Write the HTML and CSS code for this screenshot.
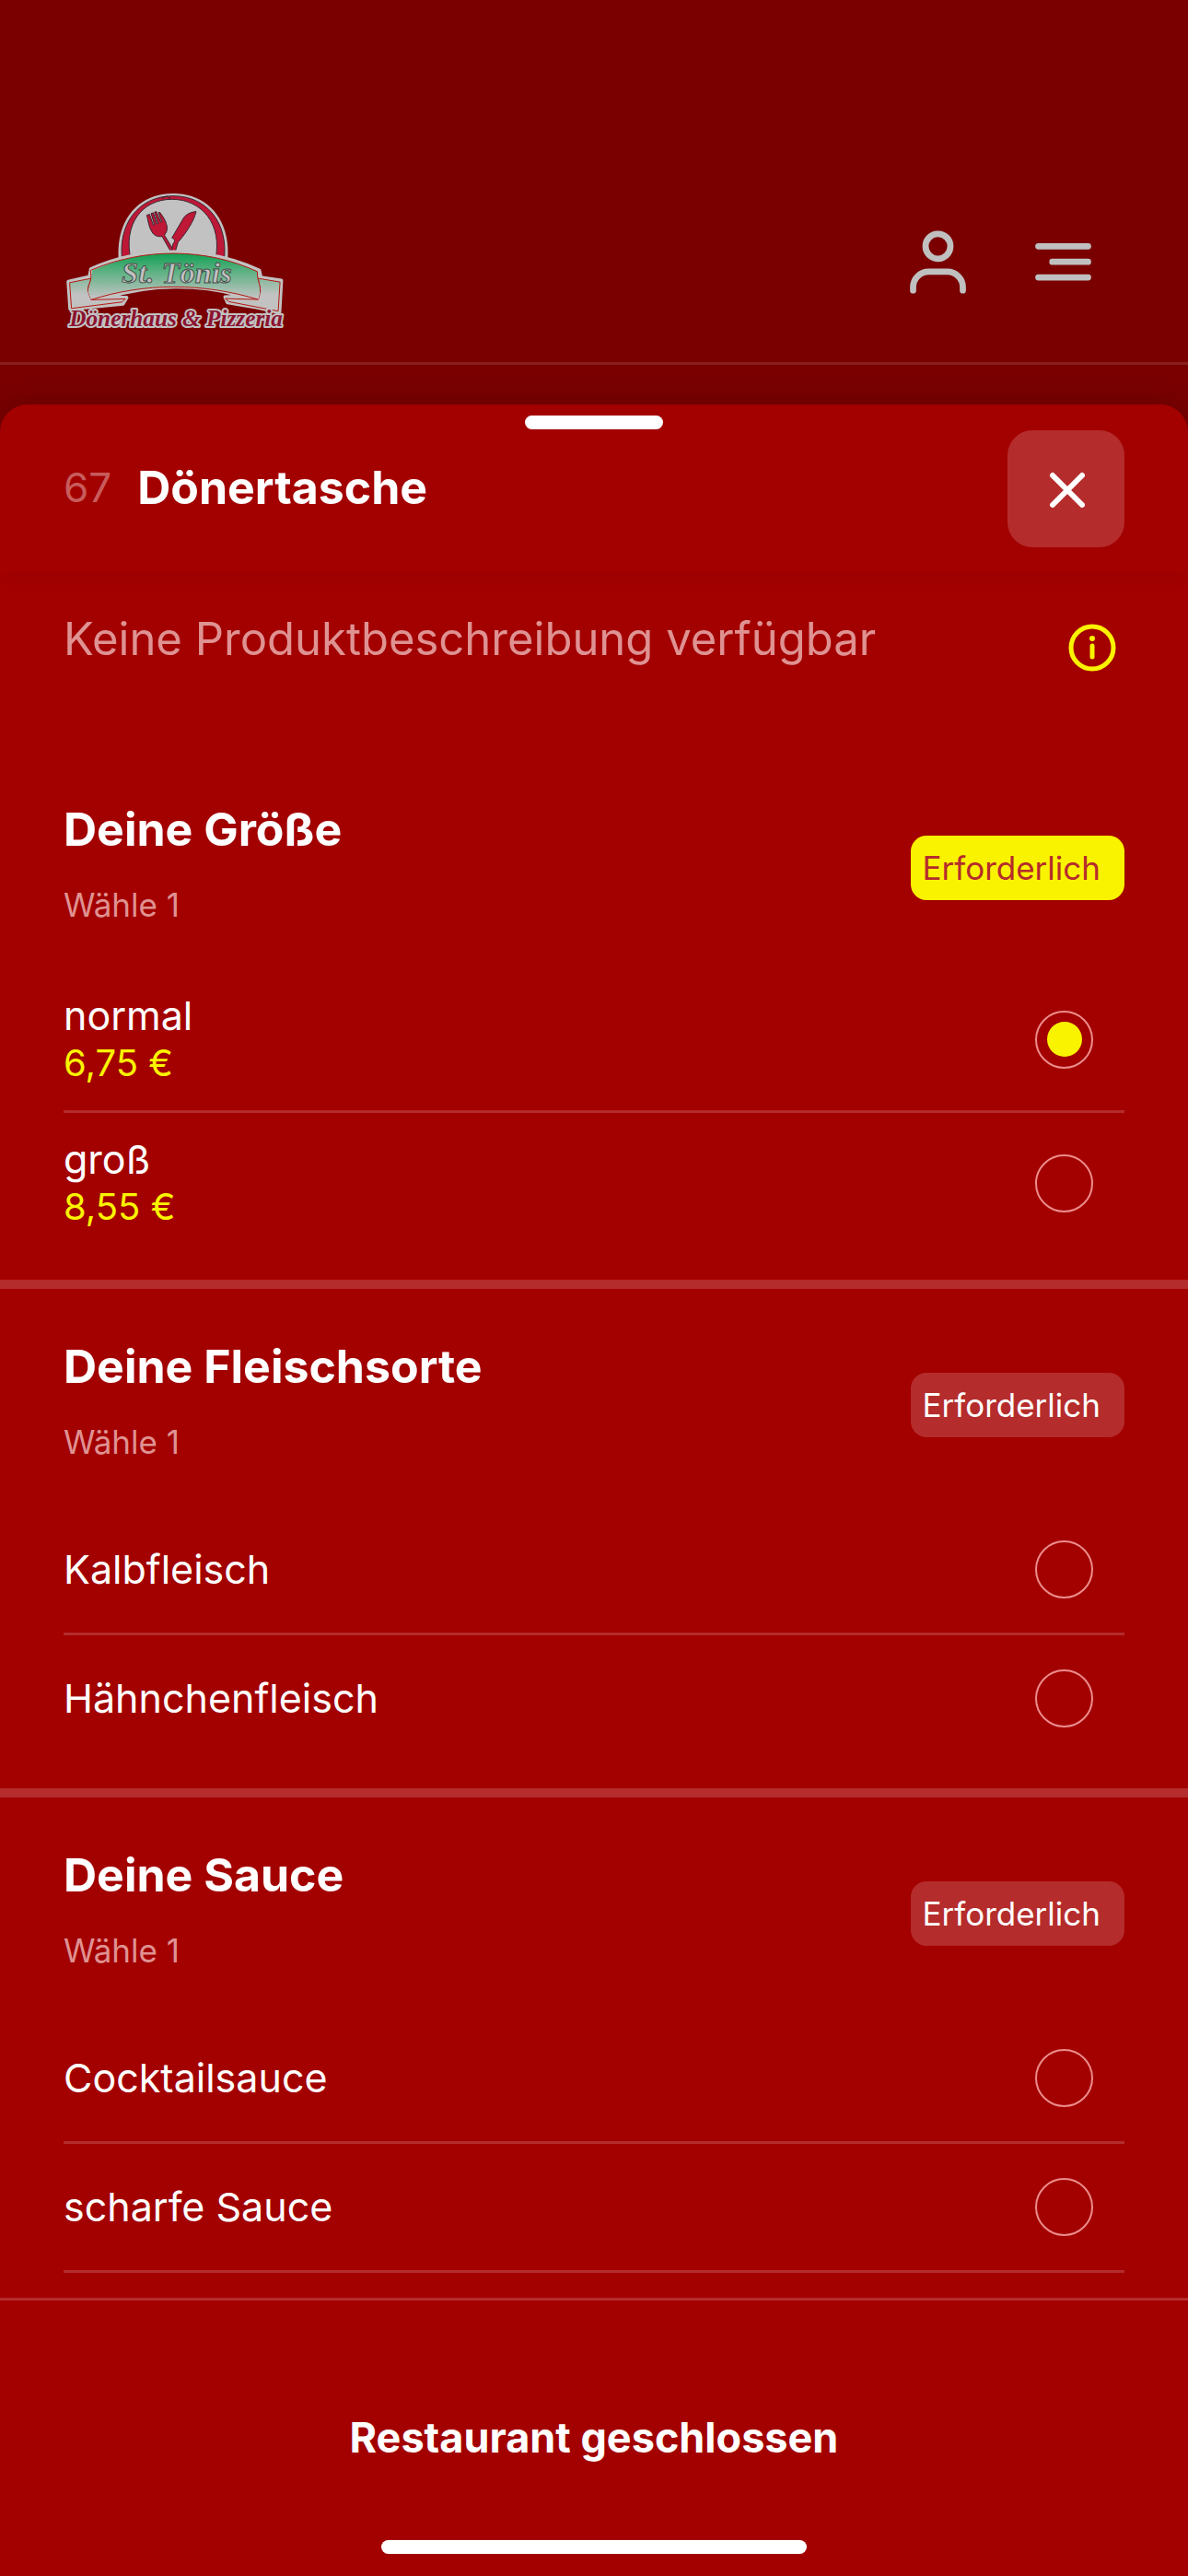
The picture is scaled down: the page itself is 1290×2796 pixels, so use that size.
FILE: index.html
```html
<!DOCTYPE html>
<html lang="de">
<head>
    <meta charset="UTF-8">
    <meta name="viewport" content="width=device-width, initial-scale=1.0">
    <title>Dönertasche</title>
    <link rel="stylesheet" href="styles.css">
</head>
<body>
    <header class="topbar">
        <a href="#" class="logo">
            <svg viewBox="60 50 720 460" width="240" height="153">
                <defs>
                    <linearGradient id="banner" x1="0" y1="250" x2="0" y2="400" gradientUnits="userSpaceOnUse">
                        <stop offset="0" stop-color="#0a9f50"/>
                        <stop offset="0.4" stop-color="#58b080"/>
                        <stop offset="1" stop-color="#c2c4c4"/>
                    </linearGradient>
                    <linearGradient id="ends" x1="0" y1="330" x2="0" y2="430" gradientUnits="userSpaceOnUse">
                        <stop offset="0" stop-color="#7fb898"/>
                        <stop offset="0.6" stop-color="#c2c2c2"/>
                    </linearGradient>
                </defs>
                <!-- plate -->
                <path d="M236 275 C226 140 305 59 414 59 S602 140 592 275Z" fill="#c2c2c2"/>
                <path d="M248 278 C232 160 300 67 414 67 S596 160 580 278Z" fill="#bf1736" stroke="#3a2430" stroke-width="3"/>
                <path d="M276 275 C250 160 312 78 410 78 S576 160 552 275Z" fill="#c2c2c2" stroke="#3a2430" stroke-width="3"/>
                <path d="M376 75 L394 68 L408 78" fill="none" stroke="#3a2430" stroke-width="3"/>
                <!-- fork -->
                <path d="M328 130 L337 127 L349 162 L353 161 L342 124 L349 122 L361 158 L365 157 L353 120 L359 118 L374 153 L377 151 L366 121 L371 121 C385 140 396 158 394 178 C392 188 387 190 386 196 L418 248 L411 257 L378 199 C366 201 355 198 347 188 C335 172 333 150 328 130Z" fill="#bf1736" stroke="#3a2430" stroke-width="3"/>
                <!-- knife -->
                <path d="M489 118 C482 148 460 184 430 218 L420 252 L408 252 L414 222 C423 214 417 206 410 204 L448 139 C458 125 472 120 489 118Z" fill="#bf1736" stroke="#3a2430" stroke-width="3"/>
                <!-- ribbon -->
                <path d="M72 347 L141 331 L146 306 C310 232 520 230 695 310 L700 333 L767 343 L761 447 L690 431 L592 415 L584 397 L640 394 C500 352 340 354 200 398 L262 399 L250 419 L78 436Z" fill="#c2c2c2" stroke="#c2c2c2" stroke-width="12" stroke-linejoin="round"/>
                <path d="M76 350 L146 336 L136 378 L146 406 L258 403 L248 413 L82 434Z" fill="url(#ends)" stroke="#b5170f" stroke-width="3"/>
                <path d="M763 348 L692 336 L699 378 L692 405 L584 402 L596 412 L757 443Z" fill="url(#ends)" stroke="#b5170f" stroke-width="3"/>
                <path d="M136 378 C140 355 146 350 150 310 C315 236 520 235 689 314 C692 350 698 350 698 380 L692 405 C510 350 320 350 146 406Z" fill="url(#banner)"/>
                <path d="M136 378 C132 355 152 350 144 310 C315 236 520 235 689 314 C688 350 700 350 698 380 M692 405 C510 350 320 350 146 406" fill="none" stroke="#b5170f" stroke-width="3"/>
                <text x="246" y="350" class="logo-name">St. Tönis</text>
                <text x="75" y="493" class="logo-sub">Dönerhaus &amp; Pizzeria</text>
            </svg>
        </a>
        <div class="topbar-actions">
            <button type="button" class="icon-button" aria-label="Konto">
                <svg viewBox="0 0 24 24" width="81" height="81">
                    <circle cx="12" cy="7.2" r="4"/>
                    <path d="M4 21.4v-1a5 5 0 0 1 5-5h6a5 5 0 0 1 5 5v1"/>
                </svg>
            </button>
            <button type="button" class="icon-button" aria-label="Menü">
                <svg viewBox="0 0 24 24" width="81" height="81">
                    <path d="M4 7.2h16M8.5 12.2H20M4 17.2h16"/>
                </svg>
            </button>
        </div>
    </header>

    <main class="sheet">
        <div class="handle"></div>
        <div class="sheet-header">
            <span class="number">67</span>
            <h1>Dönertasche</h1>
            <button type="button" class="close" aria-label="Schließen">
                <svg viewBox="0 0 40 40" width="40" height="40">
                    <path d="M5 5l32 32M37 5L5 37"/>
                </svg>
            </button>
        </div>

        <form class="sheet-body">
            <div class="description">
                <p>Keine Produktbeschreibung verfügbar</p>
                <button type="button" class="info" aria-label="Info">
                    <svg viewBox="0 0 52 52" width="52" height="52">
                        <circle cx="26" cy="26" r="23"/>
                        <path d="M26 24v12"/>
                        <circle class="dot" cx="26" cy="16" r="3"/>
                    </svg>
                </button>
            </div>

            <section class="group">
                <div class="group-header">
                    <div>
                        <h2>Deine Größe</h2>
                        <p>Wähle 1</p>
                    </div>
                    <span class="badge active">Erforderlich</span>
                </div>
                <label class="option">
                    <span>normal<span class="price">6,75 €</span></span>
                    <input type="radio" name="size" checked>
                </label>
                <label class="option">
                    <span>groß<span class="price">8,55 €</span></span>
                    <input type="radio" name="size">
                </label>
            </section>

            <section class="group">
                <div class="group-header">
                    <div>
                        <h2>Deine Fleischsorte</h2>
                        <p>Wähle 1</p>
                    </div>
                    <span class="badge">Erforderlich</span>
                </div>
                <label class="option">
                    <span>Kalbfleisch</span>
                    <input type="radio" name="meat">
                </label>
                <label class="option">
                    <span>Hähnchenfleisch</span>
                    <input type="radio" name="meat">
                </label>
            </section>

            <section class="group more">
                <div class="group-header">
                    <div>
                        <h2>Deine Sauce</h2>
                        <p>Wähle 1</p>
                    </div>
                    <span class="badge">Erforderlich</span>
                </div>
                <label class="option">
                    <span>Cocktailsauce</span>
                    <input type="radio" name="sauce">
                </label>
                <label class="option">
                    <span>scharfe Sauce</span>
                    <input type="radio" name="sauce">
                </label>
            </section>
        </form>

        <footer class="sheet-footer">
            <button type="button" class="order">Restaurant geschlossen</button>
            <div class="home-indicator"></div>
        </footer>
    </main>
</body>
</html>
```
FILE: styles.css
```css
* {
    box-sizing: border-box;
}
body {
    margin: 0;
    height: 100vh;
    display: flex;
    flex-direction: column;
    overflow: hidden;
    background: #7a0000;
    color: #fff;
    font-family: Inter, "Liberation Sans", sans-serif;
    font-size: 44px;
}
h1, h2, p {
    margin: 0;
}
button {
    padding: 0;
    border: none;
    background: none;
    color: inherit;
    font-family: inherit;
    cursor: pointer;
}
svg {
    display: block;
}

/* page header behind the sheet */
.topbar {
    flex: none;
    display: flex;
    justify-content: space-between;
    align-items: center;
    height: 396px;
    padding: 174px 95px 0 70px;
    border-bottom: 3px solid #881f1f;
}
.logo-name {
    font: italic bold 98px "Liberation Serif", serif;
    fill: #c2c2c2;
    stroke: #44504a;
    stroke-width: 3px;
}
.logo-sub {
    font: italic bold 76px "Liberation Serif", serif;
    fill: #8c1230;
    stroke: #c2c2c2;
    stroke-width: 12px;
    stroke-linejoin: round;
    paint-order: stroke;
}
.topbar-actions {
    display: flex;
    gap: 55px;
}
.icon-button svg {
    fill: none;
    stroke: #c0c0c0;
    stroke-width: 2;
    stroke-linecap: round;
}

/* bottom sheet */
.sheet {
    position: relative;
    flex: 1;
    min-height: 0;
    display: flex;
    flex-direction: column;
    margin-top: 43px;
    background: #a30000;
    border-radius: 30px 30px 0 0;
    box-shadow: 0 0 30px rgba(0, 0, 0, 0.2);
}
.handle {
    position: absolute;
    top: 12px;
    left: 50%;
    width: 150px;
    height: 15px;
    margin-left: -75px;
    border-radius: 8px;
    background: #fff;
}
.sheet-header {
    flex: none;
    display: flex;
    align-items: center;
    height: 183px;
    padding: 0 69px;
    border-radius: 30px 30px 0 0;
    box-shadow: 0 15px 15px -6px rgba(0, 0, 0, 0.04);
}
.number,
h1 {
    padding-bottom: 3px;
}
.number {
    color: #c85c5c;
}
h1 {
    margin-left: 28px;
    font-size: 50px;
    font-weight: 700;
}
.close {
    display: flex;
    align-items: center;
    justify-content: center;
    width: 127px;
    height: 127px;
    margin-left: auto;
    border-radius: 27px;
    background: #b52c2c;
}
.close svg {
    fill: none;
    stroke: #fff;
    stroke-width: 6;
    stroke-linecap: round;
}
.sheet-body {
    flex: 1;
    min-height: 0;
    overflow: hidden;
}
.description {
    display: flex;
    justify-content: space-between;
    align-items: flex-start;
    height: 194px;
    padding: 42px 78px 0 69px;
    font-size: 49px;
    line-height: 60px;
    color: #df9292;
}
.info {
    margin-top: 13px;
}
.info svg {
    fill: none;
    stroke: #faf300;
    stroke-width: 5;
    stroke-linecap: round;
}
.info .dot {
    fill: #faf300;
    stroke: none;
}

.group {
    padding: 0 69px 28px;
    border-bottom: 10px solid #b52c2c;
}
.group-header {
    display: flex;
    justify-content: space-between;
    align-items: center;
    height: 236px;
    padding: 46px 0 30px;
}
.group-header h2 {
    font-size: 50px;
    font-weight: 700;
    line-height: 76px;
}
.group-header p {
    margin-top: 4px;
    font-size: 35px;
    line-height: 80px;
    color: #df9292;
}
.badge {
    padding: 0 26px 0 13px;
    border-radius: 17px;
    background: #b52c2c;
    font-size: 35px;
    line-height: 70px;
}
.badge.active {
    background: #faf300;
    color: #b52c2c;
}
.option {
    display: flex;
    justify-content: space-between;
    align-items: center;
    min-height: 140px;
    padding: 25px 34px 26px 0;
    font-size: 43px;
    line-height: 51px;
    border-bottom: 3px solid #b52c2c;
}
.option:last-child {
    min-height: 138px;
    border-bottom: none;
}
.more .option:last-child {
    min-height: 140px;
    border-bottom: 3px solid #b52c2c;
}
.price {
    display: block;
    font-size: 40px;
    color: #faf300;
}
.option input {
    appearance: none;
    display: grid;
    place-items: center;
    width: 63px;
    height: 63px;
    margin: 0;
    border: 2px solid #ec8c8c;
    border-radius: 50%;
}
.option input:checked::before {
    content: "";
    width: 38px;
    height: 38px;
    border-radius: 50%;
    background: #faf300;
}

.sheet-footer {
    flex: none;
    display: flex;
    flex-direction: column;
    align-items: center;
    padding: 40px 69px 24px;
    border-top: 3px solid #b52c2c;
}
.order {
    width: 100%;
    height: 216px;
    font-size: 45px;
    font-weight: 700;
}
.home-indicator {
    width: 462px;
    height: 15px;
    margin-top: 4px;
    border-radius: 8px;
    background: #fff;
}
```
